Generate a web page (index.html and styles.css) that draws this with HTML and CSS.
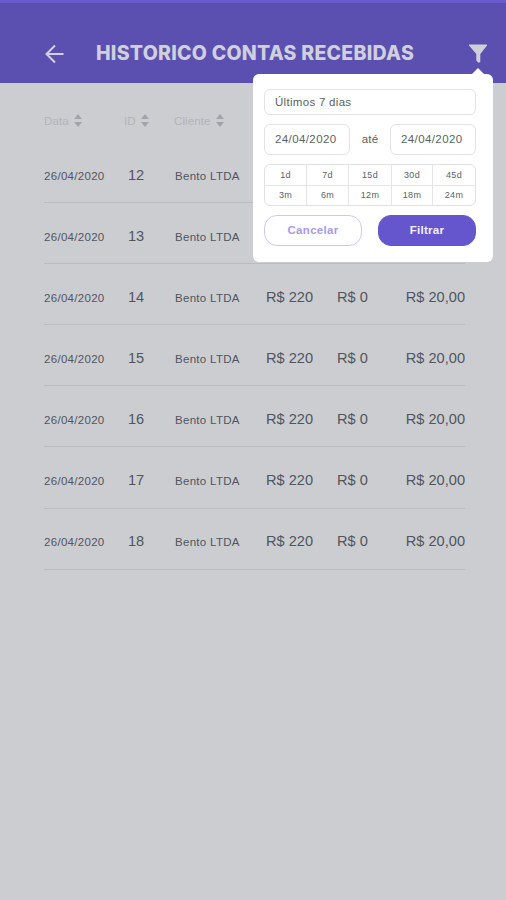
FILE: index.html
```html
<!DOCTYPE html>
<html lang="pt-BR">
<head>
<meta charset="utf-8">
<title>Historico Contas Recebidas</title>
<link rel="stylesheet" href="styles.css">
</head>
<body>
<header class="topbar">
  <svg class="back" viewBox="0 0 20 20"><path d="M19 10H2M10.500 1.500L2 10l8.500 8.500"/></svg>
  <h1>HISTORICO CONTAS RECEBIDAS</h1>
  <div class="filter">
    <svg class="funnel" viewBox="0 0 18 19"><path d="M0 .5h18v1L11.300 10v7.500q0 1-1 1h-1.300l-1.700-2V10L0 1.500z"/></svg>
    <section class="popup">
      <div class="field period">Últimos 7 dias</div>
      <div class="dates"><div class="field date">24/04/2020</div><span>até</span><div class="field date">24/04/2020</div></div>
      <div class="ranges"><span>1d</span><span>7d</span><span>15d</span><span>30d</span><span>45d</span><span>3m</span><span>6m</span><span>12m</span><span>18m</span><span>24m</span></div>
      <div class="actions"><button class="cancel">Cancelar</button><button class="apply">Filtrar</button></div>
    </section>
  </div>
</header>
<main>
  <div class="row head">
    <span>Data<svg viewBox="0 0 8 13"><path d="M0 5l4-5 4 5zM0 8h8l-4 5z"/></svg></span>
    <span>ID<svg viewBox="0 0 8 13"><path d="M0 5l4-5 4 5zM0 8h8l-4 5z"/></svg></span>
    <span>Cliente<svg viewBox="0 0 8 13"><path d="M0 5l4-5 4 5zM0 8h8l-4 5z"/></svg></span>
  </div>
  <div class="row"><span class="small">26/04/2020</span><span class="id">12</span><span class="small">Bento LTDA</span></div>
  <div class="row"><span class="small">26/04/2020</span><span class="id">13</span><span class="small">Bento LTDA</span></div>
  <div class="row"><span class="small">26/04/2020</span><span class="id">14</span><span class="small">Bento LTDA</span><span>R$ 220</span><span>R$ 0</span><span class="total">R$ 20,00</span></div>
  <div class="row"><span class="small">26/04/2020</span><span class="id">15</span><span class="small">Bento LTDA</span><span>R$ 220</span><span>R$ 0</span><span class="total">R$ 20,00</span></div>
  <div class="row"><span class="small">26/04/2020</span><span class="id">16</span><span class="small">Bento LTDA</span><span>R$ 220</span><span>R$ 0</span><span class="total">R$ 20,00</span></div>
  <div class="row"><span class="small">26/04/2020</span><span class="id">17</span><span class="small">Bento LTDA</span><span>R$ 220</span><span>R$ 0</span><span class="total">R$ 20,00</span></div>
  <div class="row"><span class="small">26/04/2020</span><span class="id">18</span><span class="small">Bento LTDA</span><span>R$ 220</span><span>R$ 0</span><span class="total">R$ 20,00</span></div>
</main>
</body>
</html>
```

FILE: styles.css
```css
* { box-sizing: border-box; }
body { margin: 0; height: 900px; background: #cccdd1; color: #50555e; font-family: "Liberation Sans", Arial, sans-serif; overflow: hidden; }
.topbar { height: 83px; padding: 22px 19px 0 44px; display: flex; align-items: center; background: #5b50b0; border-top: 3px solid #6959ce; }
.back { width: 21px; height: 20px; fill: none; stroke: #d2d1df; stroke-width: 2; }
h1 { margin: -3px 0 0 31px; font: 800 19.500px/24px Inter, sans-serif; color: #d0cfdc; white-space: nowrap; letter-spacing: .27px; }
.filter { position: relative; margin-left: auto; width: 18px; height: 19px; }
.funnel { display: block; width: 18px; height: 19px; fill: #d0d0da; margin-top: -1px; }
.popup { position: absolute; top: 29px; right: -6px; width: 240px; height: 188px; padding: 15px 17px 0 11px; border-radius: 6px; background: #fff; }
.popup::before { content: ""; position: absolute; top: -6px; right: 8px; border: solid transparent; border-width: 0 7px 7px; border-bottom-color: #fff; }
.field { border: 1px solid #e2e3e7; border-radius: 6px; display: flex; align-items: center; color: #5c5f65; font-size: 11.500px; letter-spacing: .3px; }
.period { height: 26px; padding-left: 10px; }
.dates { margin-top: 9px; display: flex; align-items: center; justify-content: space-between; font-size: 11.500px; color: #5c5f65; letter-spacing: .2px; }
.date { width: 86px; height: 31px; padding-left: 10px; letter-spacing: .4px; }
.ranges { margin-top: 9px; height: 42px; display: grid; grid-template-columns: 42px 42px 43px 41px 1fr; grid-template-rows: 1fr 1fr; border: 1px solid #e0e1e5; border-radius: 6px; font-size: 9px; letter-spacing: .3px; color: #5c5f65; }
.ranges span { display: flex; align-items: center; justify-content: center; border-right: 1px solid #e4e5e8; }
.ranges span:nth-child(5n) { border-right: 0; }
.ranges span:nth-child(n+6) { border-top: 1px solid #e4e5e8; }
.actions { display: flex; justify-content: space-between; margin-top: 9px; }
button { width: 98px; height: 31px; padding: 0; border-radius: 13px; font: bold 11.500px "Liberation Sans", sans-serif; letter-spacing: .3px; }
.cancel { color: #a79be5; background: #fff; border: 1px solid #cfc8f3; }
.apply { color: #f3f0ff; background: #6656ce; border: 1px solid #6656ce; }
main { width: 421px; margin-left: 44px; }
.row { height: 61.100px; display: grid; grid-template-columns: 84px 47px 91px 71px 68px 60px; align-items: center; padding-top: 5px; border-bottom: 1px solid #babcc1; font-size: 14.600px; white-space: nowrap; }
.row .total { text-align: right; }
.small { font-size: 11.500px; letter-spacing: .3px; padding-top: 2px; }
.head { height: 59px; grid-template-columns: 80px 50px 100px; padding-top: 16px; border: 0; color: #b1b4b9; font-size: 11.500px; letter-spacing: .1px; }
.head span { display: flex; align-items: center; }
.head svg { width: 8px; height: 13px; margin-left: 5px; fill: #a1a5ab; }
```
